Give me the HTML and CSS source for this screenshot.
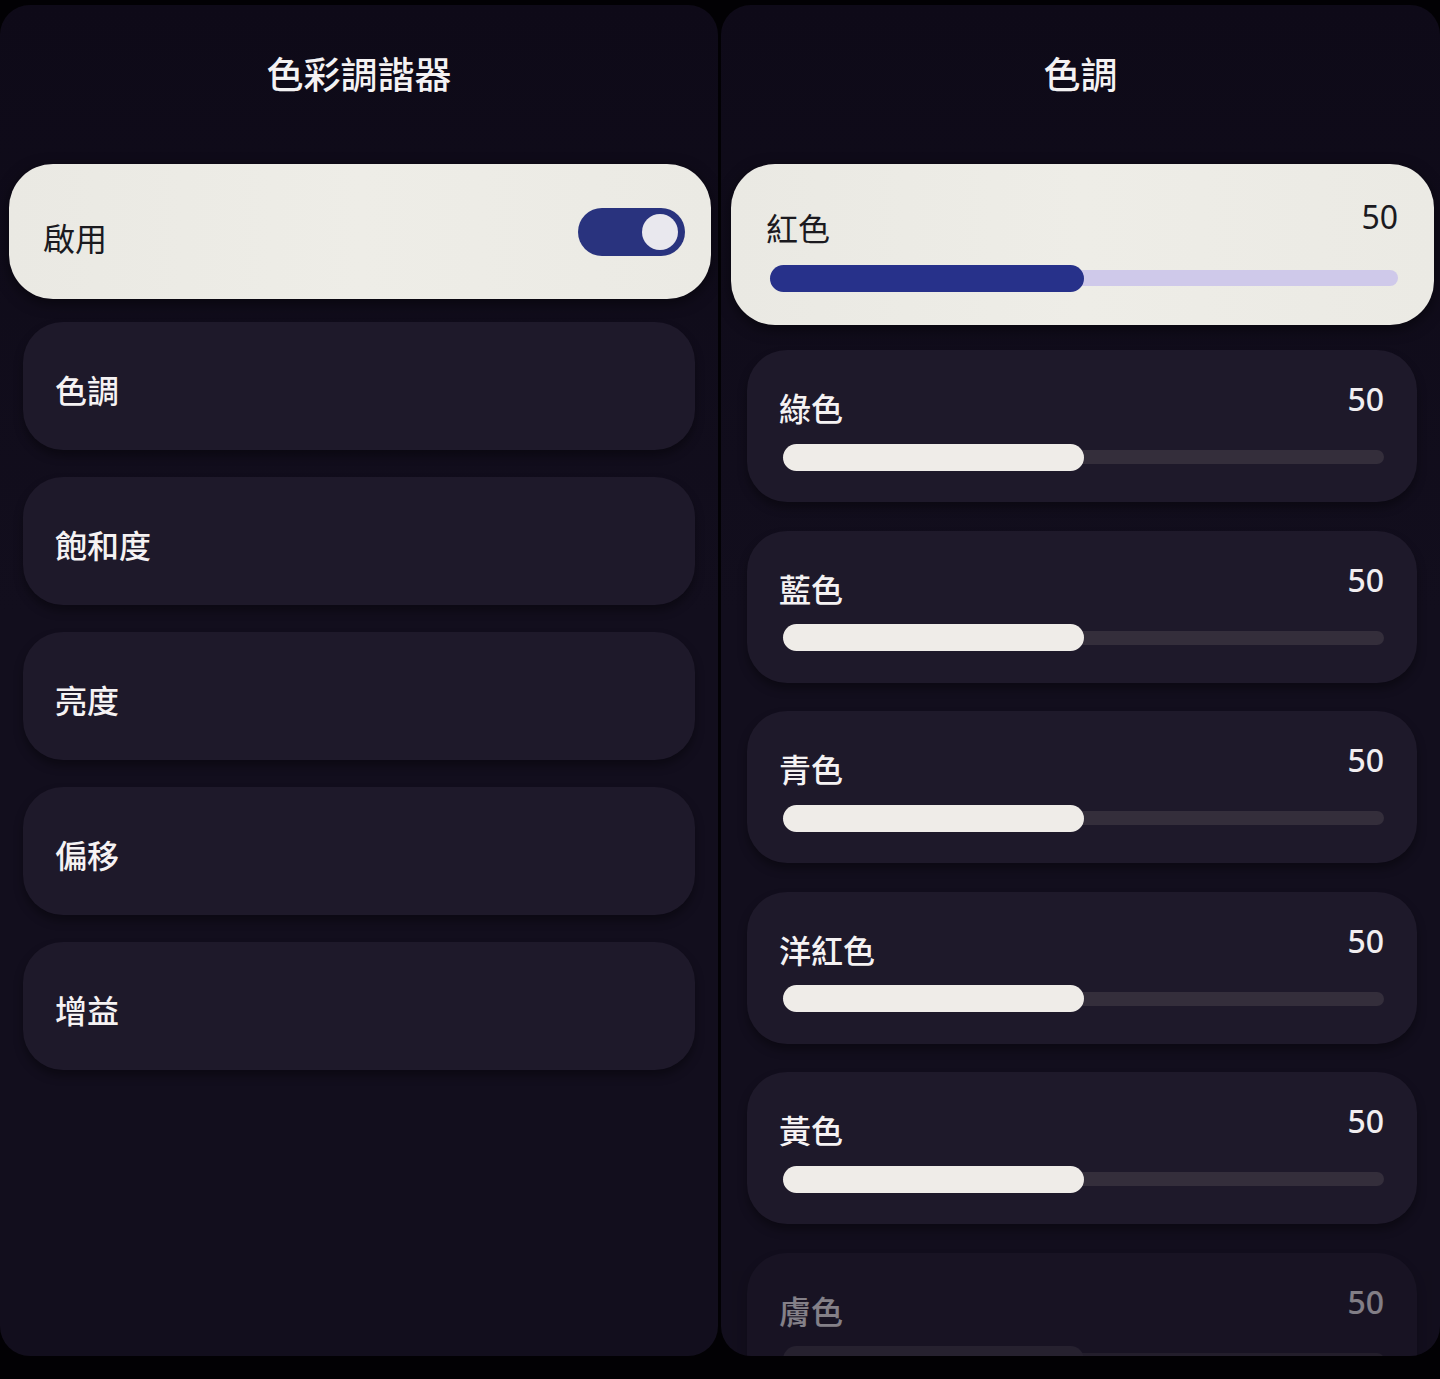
FILE: index.html
```html
<!DOCTYPE html>
<html lang="zh-Hant">
<head>
<meta charset="utf-8">
<title>色彩調諧器</title>
<link rel="stylesheet" href="styles.css">
</head>
<body>
<div class="screens">
  <section class="panel panel-left">
    <header class="panel-title">色彩調諧器</header>
    <div class="list">
      <div class="menu-card focused enable">
        <span class="menu-label">啟用</span>
        <span class="toggle"><span class="knob"></span></span>
      </div>
      <div class="menu-card"><span class="menu-label">色調</span></div>
      <div class="menu-card"><span class="menu-label">飽和度</span></div>
      <div class="menu-card"><span class="menu-label">亮度</span></div>
      <div class="menu-card"><span class="menu-label">偏移</span></div>
      <div class="menu-card"><span class="menu-label">增益</span></div>
    </div>
  </section>
  <section class="panel panel-right">
    <header class="panel-title">色調</header>
    <div class="list list-right">
      <div class="slider-card focused">
        <div class="head"><span class="s-label">紅色</span><span class="s-value">50</span></div>
        <div class="slider"><span class="fill" style="width:50%"></span><span class="track"></span></div>
      </div>
      <div class="slider-card">
        <div class="head"><span class="s-label">綠色</span><span class="s-value">50</span></div>
        <div class="slider"><span class="fill" style="width:50%"></span><span class="track"></span></div>
      </div>
      <div class="slider-card">
        <div class="head"><span class="s-label">藍色</span><span class="s-value">50</span></div>
        <div class="slider"><span class="fill" style="width:50%"></span><span class="track"></span></div>
      </div>
      <div class="slider-card">
        <div class="head"><span class="s-label">青色</span><span class="s-value">50</span></div>
        <div class="slider"><span class="fill" style="width:50%"></span><span class="track"></span></div>
      </div>
      <div class="slider-card">
        <div class="head"><span class="s-label">洋紅色</span><span class="s-value">50</span></div>
        <div class="slider"><span class="fill" style="width:50%"></span><span class="track"></span></div>
      </div>
      <div class="slider-card">
        <div class="head"><span class="s-label">黃色</span><span class="s-value">50</span></div>
        <div class="slider"><span class="fill" style="width:50%"></span><span class="track"></span></div>
      </div>
      <div class="slider-card faded">
        <div class="head"><span class="s-label">膚色</span><span class="s-value">50</span></div>
        <div class="slider"><span class="fill" style="width:50%"></span><span class="track"></span></div>
      </div>
    </div>
  </section>
</div>
</body>
</html>
```
FILE: styles.css
```css
html, body {
  margin: 0;
  padding: 0;
  background: #020104;
  height: 1379px;
  overflow: hidden;
}

body {
  font-family: "Noto Sans CJK TC", "Noto Sans", sans-serif;
  color: #f3f0f2;
}

.screens {
  display: flex;
  gap: 3px;
  padding-top: 5px;
}

.panel {
  height: 1351px;
  border-radius: 30px;
  background: linear-gradient(180deg, #0e0a18 0%, #120e1d 45%, #120e1d 100%);
  overflow: hidden;
  display: flex;
  flex-direction: column;
}

.panel-left { width: 718px; }
.panel-right { width: 719px; }

.panel-title {
  box-sizing: border-box;
  height: 159px;
  padding-top: 44px;
  line-height: 48px;
  font-size: 37px;
  font-weight: 500;
  text-align: center;
  color: #f4f2f3;
  flex: none;
}

.list {
  display: flex;
  flex-direction: column;
  padding: 0 23px;
}

/* ---------- left menu ---------- */
.menu-card {
  box-sizing: border-box;
  height: 128px;
  margin-bottom: 27px;
  border-radius: 40px;
  background: #1e192a;
  box-shadow: 0 6px 10px rgba(0, 0, 0, 0.35);
  display: flex;
  align-items: center;
  padding: 6px 32px 0;
}

.menu-label {
  font-size: 32px;
  font-weight: 500;
  line-height: 40px;
  color: #f5f2f3;
}

.menu-card.focused {
  height: 135px;
  margin: 0 -16px 23px -14px;
  background: linear-gradient(90deg, #eae9e3 0%, #eeede7 50%, #ebeae4 100%);
  border-radius: 44px;
  padding: 0 26px 0 34px;
  justify-content: space-between;
  box-shadow: 0 4px 14px rgba(0, 0, 0, 0.5);
}

.menu-card.focused .menu-label {
  color: #1b1a1f;
  font-weight: 400;
  padding-top: 11px;
}

.toggle {
  box-sizing: border-box;
  width: 107px;
  height: 48px;
  border-radius: 24px;
  background: #29337e;
  display: flex;
  align-items: center;
  justify-content: flex-end;
  padding: 0 7px;
}

.knob {
  width: 36px;
  height: 36px;
  border-radius: 50%;
  background: #e9e8ee;
}

/* ---------- right sliders ---------- */
.list-right {
  padding: 0 23px 0 26px;
}

.slider-card {
  box-sizing: border-box;
  flex: none;
  height: 152px;
  margin-bottom: 28.6px;
  border-radius: 40px;
  background: #1e192a;
  box-shadow: 0 6px 10px rgba(0, 0, 0, 0.35);
  padding: 29px 33px 0 32px;
}

.head {
  display: flex;
  justify-content: space-between;
  align-items: flex-start;
  height: 48px;
}

.s-label {
  font-size: 32px;
  font-weight: 500;
  line-height: 40px;
  padding-top: 8px;
  color: #f5f2f3;
}

.s-value {
  font-family: "Noto Sans", "Open Sans", sans-serif;
  font-size: 32px;
  font-weight: 500;
  line-height: 40px;
  color: #f1eef0;
}

.slider {
  display: flex;
  align-items: center;
  height: 27px;
  margin: 16.5px 0 0 4px;
}

.fill {
  position: relative;
  z-index: 1;
  height: 27px;
  border-radius: 14px;
  background: #efece8;
  flex: none;
}

.track {
  flex: 1;
  height: 14px;
  margin-left: -14px;
  border-radius: 0 7px 7px 0;
  background: #342e3b;
}

.slider-card.focused {
  height: 161px;
  margin: 0 -17px 25px -16px;
  border-radius: 44px;
  background: linear-gradient(90deg, #eae9e3 0%, #eeede7 50%, #ebeae4 100%);
  box-shadow: 0 4px 14px rgba(0, 0, 0, 0.5);
  padding: 33px 36px 0 35px;
}

.slider-card.focused .head { height: 50px; }

.slider-card.focused .s-label {
  color: #1b1a1f;
  font-weight: 400;
  padding-top: 10px;
}

.slider-card.focused .s-value {
  color: #1b1a1f;
  font-weight: 400;
}

.slider-card.focused .slider {
  margin-top: 17.5px;
}

.slider-card.focused .fill {
  background: #27318a;
}

.slider-card.focused .track {
  height: 16px;
  border-radius: 0 8px 8px 0;
  background: #cfc9ea;
}

.slider-card.faded {
  opacity: 0.5;
}

.slider-card.faded .fill {
  background: #3a3442;
}
```
